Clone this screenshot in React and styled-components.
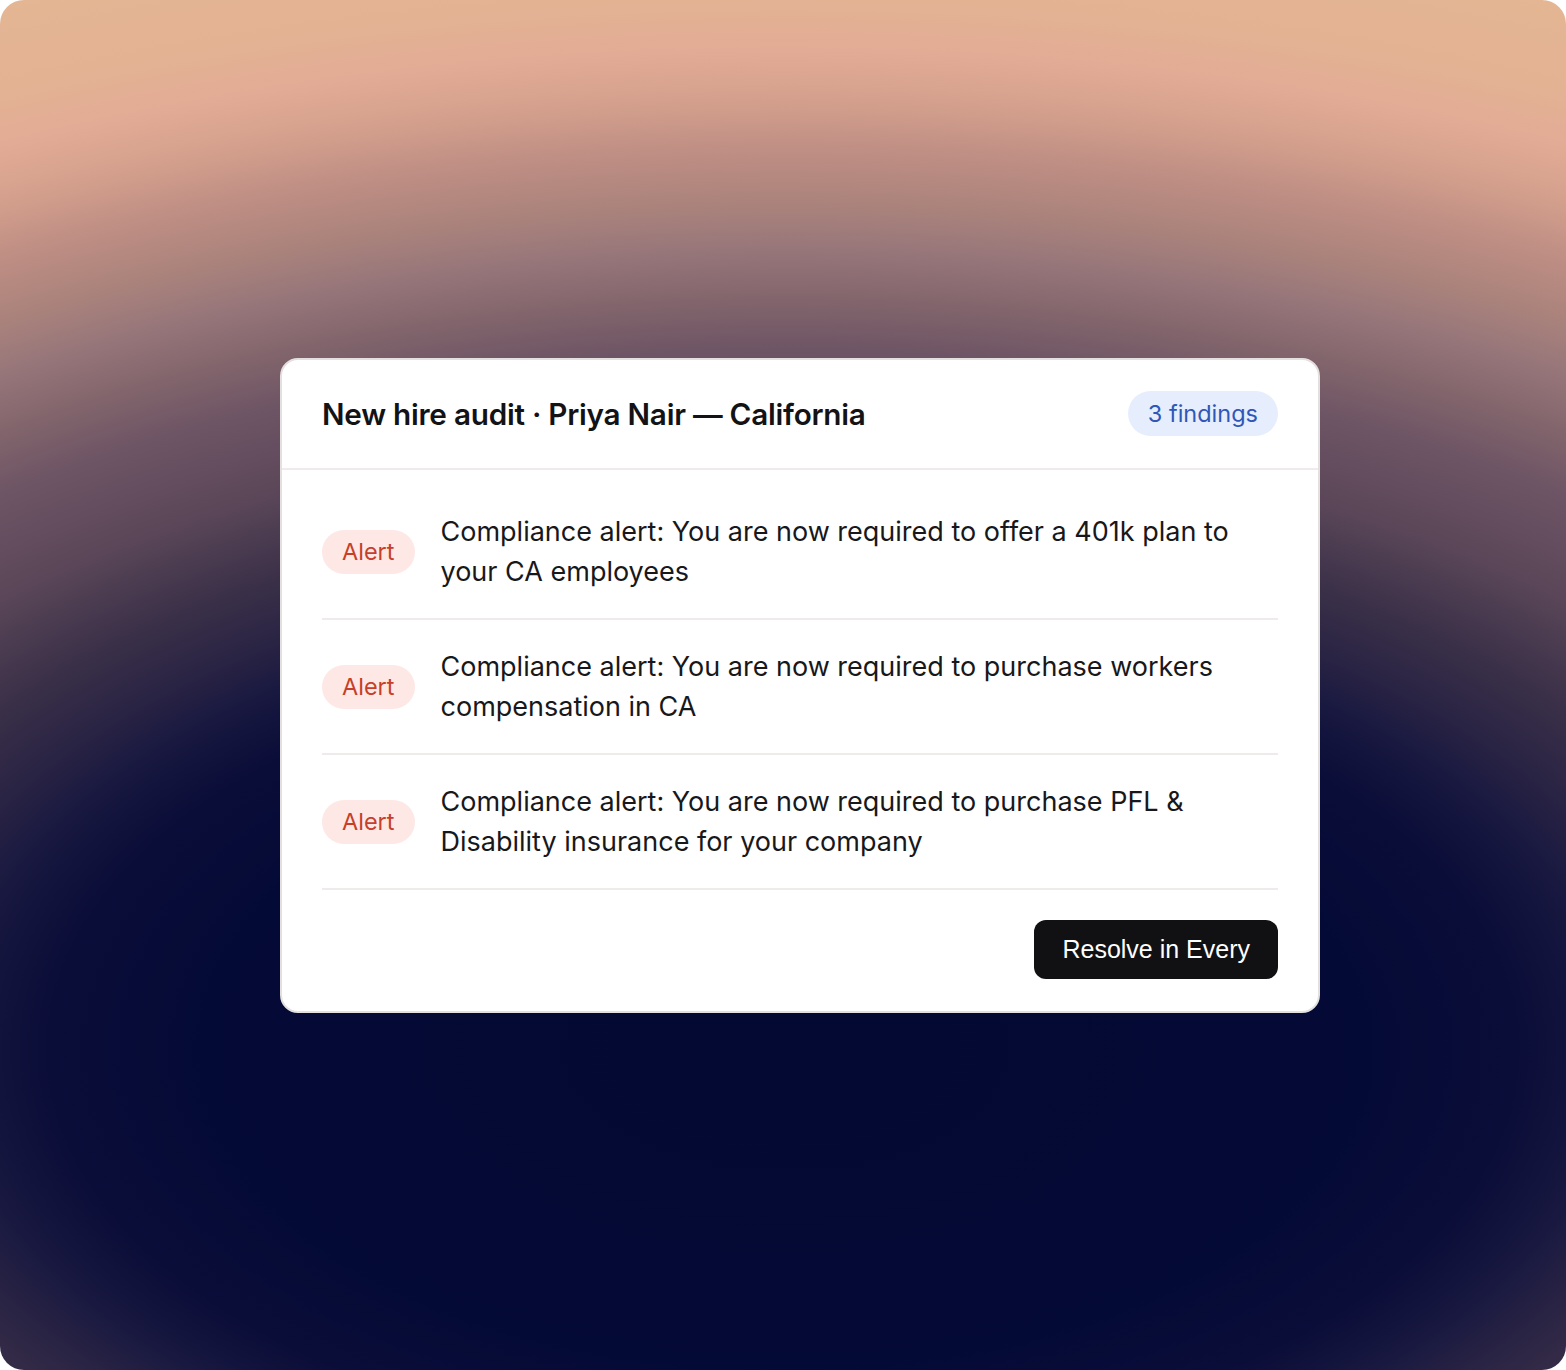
import React from "react";
import styled, { createGlobalStyle } from "styled-components";

const Global = createGlobalStyle`
  html, body { margin: 0; padding: 0; background: #ffffff; }
  * { box-sizing: border-box; }
`;

const Stage = styled.div`
  width: 1566px;
  height: 1370px;
  border-radius: 24px;
  overflow: hidden;
  display: flex;
  align-items: center;
  justify-content: center;
  padding-left: 34px;
  background: radial-gradient(
    ellipse 1928px 1050px at 783px 1050px,
    #040933 0%,
    #040a36 30%,
    #0a0d38 38%,
    #181840 43%,
    #2a2444 47%,
    #3a3048 52%,
    #5a4658 59%,
    #6e5565 66.7%,
    #82656c 71.4%,
    #97767a 76.2%,
    #ac847c 81%,
    #bf8e84 85.7%,
    #d4a08d 90.5%,
    #e2ab95 95.2%,
    #e3b293 100%,
    #e3b894 112%
  );
`;

const Card = styled.section`
  width: 1040px;
  background: #ffffff;
  border: 2px solid #e4e0df;
  border-radius: 18px;
  overflow: hidden;
  font-family: Inter, "Noto Sans", sans-serif;
`;

const Header = styled.header`
  height: 110px;
  padding: 0 40px;
  display: flex;
  align-items: center;
  justify-content: space-between;
  border-bottom: 2px solid #efebea;
`;

const Title = styled.h1`
  margin: 0;
  font-size: 29.7px;
  font-weight: 600;
  color: #131316;
  letter-spacing: -0.25px;
`;

const Badge = styled.span`
  height: 45px;
  padding: 0 20px;
  display: inline-flex;
  align-items: center;
  border-radius: 999px;
  background: #e6edfc;
  color: #2d58b8;
  font-size: 23.5px;
  font-weight: 400;
`;

const Body = styled.div`
  padding: 15px 40px 0;
`;

const Row = styled.div`
  display: flex;
  align-items: center;
  gap: 26px;
  padding: 27px 0 26px;
  border-bottom: 2px solid #efebea;
`;

const Pill = styled.span`
  flex: none;
  height: 44px;
  padding: 0 20px;
  display: inline-flex;
  align-items: center;
  border-radius: 999px;
  background: ${(p) => p.$bg};
  color: ${(p) => p.$fg};
  font-size: 23.5px;
`;

const Message = styled.p`
  margin: 0;
  font-size: 27px;
  line-height: 40px;
  color: #18181b;
  max-width: 820px;
`;

const Footer = styled.footer`
  display: flex;
  justify-content: flex-end;
  padding: 30px 40px 32px;
`;

const Button = styled.button`
  height: 59px;
  padding: 0 28px;
  border: none;
  border-radius: 12px;
  background: #111113;
  color: #ffffff;
  font-family: "Liberation Sans", Arial, sans-serif;
  font-size: 25px;
`;

const findings = [
  "Compliance alert: You are now required to offer a 401k plan to your CA employees",
  "Compliance alert: You are now required to purchase workers compensation in CA",
  "Compliance alert: You are now required to purchase PFL & Disability insurance for your company",
];

export default function App() {
  return (
    <>
      <Global />
      <Stage>
        <Card>
          <Header>
            <Title>New hire audit · Priya Nair — California</Title>
            <Badge>3 findings</Badge>
          </Header>
          <Body>
            {findings.map((f) => (
              <Row key={f}>
                <Pill $bg="#fde8e5" $fg="#c63f2a">Alert</Pill>
                <Message>{f}</Message>
              </Row>
            ))}
          </Body>
          <Footer>
            <Button>Resolve in Every</Button>
          </Footer>
        </Card>
      </Stage>
    </>
  );
}
